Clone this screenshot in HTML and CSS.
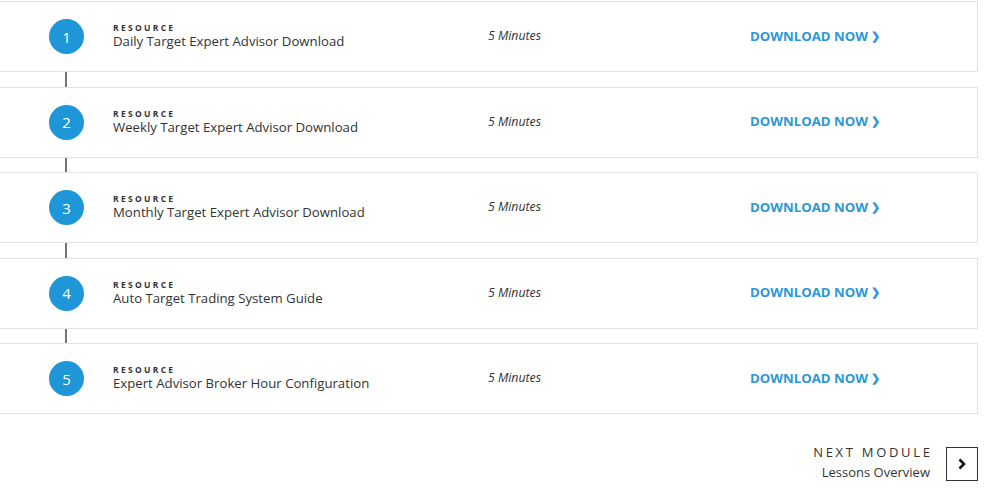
FILE: index.html
```html
<!DOCTYPE html>
<html lang="en">
<head>
  <meta charset="UTF-8">
  <title>Module Resources</title>
  <link rel="stylesheet" href="styles.css">
</head>
<body>
  <div class="steps">
    <div class="card">
      <span class="num">1</span>
      <div class="info">
        <span class="kind">Resource</span>
        <span class="title">Daily Target Expert Advisor Download</span>
      </div>
      <span class="time">5 Minutes</span>
      <a class="action" href="#">Download Now <span class="chev">&#x276F;</span></a>
    </div>
    <div class="connector"></div>
    <div class="card">
      <span class="num">2</span>
      <div class="info">
        <span class="kind">Resource</span>
        <span class="title">Weekly Target Expert Advisor Download</span>
      </div>
      <span class="time">5 Minutes</span>
      <a class="action" href="#">Download Now <span class="chev">&#x276F;</span></a>
    </div>
    <div class="connector"></div>
    <div class="card">
      <span class="num">3</span>
      <div class="info">
        <span class="kind">Resource</span>
        <span class="title">Monthly Target Expert Advisor Download</span>
      </div>
      <span class="time">5 Minutes</span>
      <a class="action" href="#">Download Now <span class="chev">&#x276F;</span></a>
    </div>
    <div class="connector"></div>
    <div class="card">
      <span class="num">4</span>
      <div class="info">
        <span class="kind">Resource</span>
        <span class="title">Auto Target Trading System Guide</span>
      </div>
      <span class="time">5 Minutes</span>
      <a class="action" href="#">Download Now <span class="chev">&#x276F;</span></a>
    </div>
    <div class="connector"></div>
    <div class="card">
      <span class="num">5</span>
      <div class="info">
        <span class="kind">Resource</span>
        <span class="title">Expert Advisor Broker Hour Configuration</span>
      </div>
      <span class="time">5 Minutes</span>
      <a class="action" href="#">Download Now <span class="chev">&#x276F;</span></a>
    </div>
  </div>

  <div class="next">
    <div class="next-text">
      <span class="next-label">Next Module</span>
      <span class="next-title">Lessons Overview</span>
    </div>
    <a class="next-btn" href="#">
      <svg width="12" height="12" viewBox="0 0 12 12"><path d="M3.5 1.5 L8 6 L3.5 10.5" fill="none" stroke="#111" stroke-width="2.6"/></svg>
    </a>
  </div>
</body>
</html>
```

FILE: styles.css
```css
body {
  margin: 0;
  font-family: "Open Sans", "Liberation Sans", sans-serif;
  color: #333;
  background: #fff;
}
.steps {
  margin: 1px 22px 0 -10px;
}
.card {
  display: flex;
  align-items: center;
  height: 69px;
  border: 1px solid #e2e2e2;
  padding-left: 58px;
}
.num {
  flex: none;
  width: 35px;
  height: 35px;
  border-radius: 50%;
  background: #1f96d7;
  color: #fff;
  font-size: 15px;
  display: flex;
  align-items: center;
  justify-content: center;
  margin-right: 29px;
}
.info {
  width: 375px;
  display: flex;
  flex-direction: column;
}
.kind {
  font-size: 8.5px;
  font-weight: 700;
  letter-spacing: 2.3px;
  text-transform: uppercase;
  color: #333;
  line-height: 9px;
}
.title {
  font-size: 13.2px;
  line-height: 18px;
  color: #333;
}
.time {
  width: 262px;
  font-size: 12.3px;
  font-style: italic;
  color: #333;
  margin-top: -2px;
}
.action {
  font-size: 13.2px;
  font-weight: 700;
  color: #2b97d6;
  text-decoration: none;
  text-transform: uppercase;
  margin-top: -2px;
}
.chev {
  font-size: 11px;
  position: relative;
  top: -1px;
}
.connector {
  width: 2px;
  height: 14.5px;
  margin-left: 75px;
  background: #6d7780;
}
.next {
  display: flex;
  justify-content: flex-end;
  align-items: center;
  gap: 16px;
  margin: 28px 22px 0 0;
}
.next-text {
  display: flex;
  flex-direction: column;
  align-items: flex-end;
}
.next-label {
  font-size: 13px;
  letter-spacing: 2.7px;
  text-transform: uppercase;
  margin-right: -2.7px;
  line-height: 20px;
}
.next-title {
  font-size: 13px;
  line-height: 20px;
}
.next-btn {
  width: 30px;
  height: 32px;
  border: 1px solid #333;
  display: flex;
  align-items: center;
  justify-content: center;
  margin-top: 4px;
}
```
